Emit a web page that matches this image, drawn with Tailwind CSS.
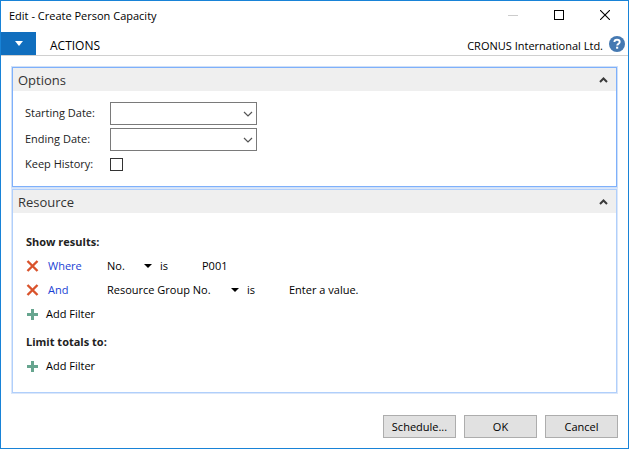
<!DOCTYPE html>
<html lang="en">
<head>
<meta charset="utf-8">
<meta name="viewport" content="width=device-width, initial-scale=1">
<title>Edit - Create Person Capacity</title>
<script src="https://cdn.jsdelivr.net/npm/@tailwindcss/browser@4"></script>
</head>
<body class="min-h-screen flex flex-col bg-white border border-[#1883d7] font-['Open_Sans',sans-serif] text-[11px] leading-4 text-black">

<header class="flex items-start justify-between h-[31px] pl-2 pr-[18px]">
  <h1 class="pt-[7px] text-[11px]">Edit - Create Person Capacity</h1>
  <div class="flex items-center gap-9 h-7">
    <button type="button" aria-label="Minimize" disabled><svg class="block" width="10" height="10" viewBox="0 0 10 10" shape-rendering="crispEdges"><path d="M0 5.5h10" stroke="#ccc"/></svg></button>
    <button type="button" aria-label="Maximize"><svg class="block" width="10" height="10" viewBox="0 0 10 10" fill="none" shape-rendering="crispEdges"><rect x=".5" y=".5" width="9" height="9" stroke="#000"/></svg></button>
    <button type="button" aria-label="Close"><svg class="block" width="10" height="10" viewBox="0 0 10 10" fill="none"><path d="M0 0l10 10M10 0L0 10" stroke="#000" stroke-width="1.1"/></svg></button>
  </div>
</header>

<nav class="flex items-center h-6 border-b border-[#d0d0d0]">
  <button type="button" aria-label="Application menu" class="flex items-center justify-center w-[35px] h-full bg-[#106ebe]">
    <svg width="8" height="5" viewBox="0 0 8 5"><path d="M0 0h8L4 5z" fill="#fff"/></svg>
  </button>
  <button type="button" class="pl-3.5 pt-1 text-[12px]">ACTIONS</button>
  <span class="ml-auto pt-1 text-[11px]">CRONUS International Ltd.</span>
  <button type="button" aria-label="Help" class="ml-1.5 mr-[3px]">
    <svg class="block" width="16" height="16" viewBox="0 0 16 16" fill="none"><circle cx="8" cy="8" r="8" fill="#4579b2"/><path d="M5.4 6.1C5.4 4.5 6.500 3.700 8 3.700s2.700.800 2.700 2.200c0 1.700-2.500 1.800-2.500 3.700" stroke="#fff" stroke-width="1.900"/><rect x="7.100" y="10.700" width="2.100" height="2" fill="#fff"/></svg>
  </button>
</nav>

<main class="flex flex-col gap-0.5 px-[11px] pt-[11px]">
  <section class="border border-[#7eb0fb] ring-1 ring-[#cfe0f8]">
    <div class="flex items-center justify-between h-[23px] pl-[5px] pr-2 bg-[#efefef]">
      <h2 class="text-[13px] text-[#333]">Options</h2>
      <button type="button" aria-label="Collapse Options"><svg class="block" width="9" height="6" viewBox="0 0 9 6" fill="none"><path d="M1 5l3.500-3.500L8 5" stroke="#3a3a3a" stroke-width="2"/></svg></button>
    </div>
    <form class="grid grid-cols-[85px_147px] items-center gap-y-[3px] pl-3 pt-[11px] pb-3 text-[#222]">
      <label for="start" class="pb-0.5">Starting Date:</label>
      <div class="relative h-[23px]">
        <select id="start" class="block appearance-none w-full h-full border border-[#7a7a7a] bg-white pl-1"><option></option></select>
        <svg class="absolute right-1 top-[9px] pointer-events-none" width="10" height="6" viewBox="0 0 10 6" fill="none"><path d="M1 1l4 4 4-4" stroke="#555" stroke-width="1.200"/></svg>
      </div>
      <label for="end" class="pb-0.5">Ending Date:</label>
      <div class="relative h-[23px]">
        <select id="end" class="block appearance-none w-full h-full border border-[#7a7a7a] bg-white pl-1"><option></option></select>
        <svg class="absolute right-1 top-[9px] pointer-events-none" width="10" height="6" viewBox="0 0 10 6" fill="none"><path d="M1 1l4 4 4-4" stroke="#555" stroke-width="1.200"/></svg>
      </div>
      <label for="keep" class="pt-0.5 pb-0.5">Keep History:</label>
      <input id="keep" type="checkbox" class="appearance-none size-[13px] border border-[#333] bg-white checked:bg-[#333]">
    </form>
  </section>

  <section class="border border-[#b0cffb] ring-1 ring-[#dbe7fa]">
    <div class="flex items-center justify-between h-[23px] pl-[5px] pr-2 bg-[#efefef]">
      <h2 class="text-[13px] text-[#333]">Resource</h2>
      <button type="button" aria-label="Collapse Resource"><svg class="block" width="9" height="6" viewBox="0 0 9 6" fill="none"><path d="M1 5l3.500-3.500L8 5" stroke="#3a3a3a" stroke-width="2"/></svg></button>
    </div>
    <div class="pl-[13px] pt-[17px] pb-[14px]">
      <h3 class="h-6 leading-6 font-bold text-[11px] text-[#222]">Show results:</h3>
      <div class="flex items-center h-6">
        <button type="button" aria-label="Remove filter" class="w-[22px]"><svg class="block" width="13" height="12" viewBox="0 0 13 12" fill="none"><path d="M1.500 1l10 10M11.500 1l-10 10" stroke="#d9532c" stroke-width="2.400"/></svg></button>
        <a href="#" class="w-[59px] text-[#1a3fd4]">Where</a>
        <div class="relative w-[45px]">
          <select aria-label="Filter field" class="block appearance-none w-full bg-transparent"><option>No.</option></select>
          <svg class="absolute right-0 top-[6px] pointer-events-none" width="8" height="4" viewBox="0 0 8 4"><path d="M0 0h8L4 4z" fill="#000"/></svg>
        </div>
        <span class="ml-2 w-[42px]">is</span>
        <input aria-label="Filter value" value="P001" class="w-24 bg-transparent">
      </div>
      <div class="flex items-center h-6">
        <button type="button" aria-label="Remove filter" class="w-[22px]"><svg class="block" width="13" height="12" viewBox="0 0 13 12" fill="none"><path d="M1.500 1l10 10M11.500 1l-10 10" stroke="#d9532c" stroke-width="2.400"/></svg></button>
        <a href="#" class="w-[59px] text-[#1a3fd4]">And</a>
        <div class="relative w-[132px]">
          <select aria-label="Filter field" class="block appearance-none w-full bg-transparent"><option>Resource Group No.</option></select>
          <svg class="absolute right-0 top-[6px] pointer-events-none" width="8" height="4" viewBox="0 0 8 4"><path d="M0 0h8L4 4z" fill="#000"/></svg>
        </div>
        <span class="ml-2 w-[42px]">is</span>
        <input aria-label="Filter value" placeholder="Enter a value." class="w-24 bg-transparent placeholder:text-black">
      </div>
      <button type="button" class="flex items-center gap-2 h-6 pl-px"><svg width="11" height="11" viewBox="0 0 11 11" shape-rendering="crispEdges"><path d="M4 0h3v4h4v3H7v4H4V7H0V4h4z" fill="#67a58f"/></svg>Add Filter</button>
      <h3 class="mt-1 h-6 leading-6 font-bold text-[11px] text-[#222]">Limit totals to:</h3>
      <button type="button" class="flex items-center gap-2 h-6 pl-px"><svg width="11" height="11" viewBox="0 0 11 11" shape-rendering="crispEdges"><path d="M4 0h3v4h4v3H7v4H4V7H0V4h4z" fill="#67a58f"/></svg>Add Filter</button>
    </div>
  </section>
</main>

<footer class="mt-auto flex justify-end gap-2 pt-5 pr-2.5 pb-2.5">
  <button type="button" class="w-[73px] h-[23px] border border-[#adadad] bg-[#e1e1e1]">Schedule...</button>
  <button type="button" class="w-[73px] h-[23px] border border-[#adadad] bg-[#e1e1e1]">OK</button>
  <button type="button" class="w-[73px] h-[23px] border border-[#adadad] bg-[#e1e1e1]">Cancel</button>
</footer>
</body>
</html>
